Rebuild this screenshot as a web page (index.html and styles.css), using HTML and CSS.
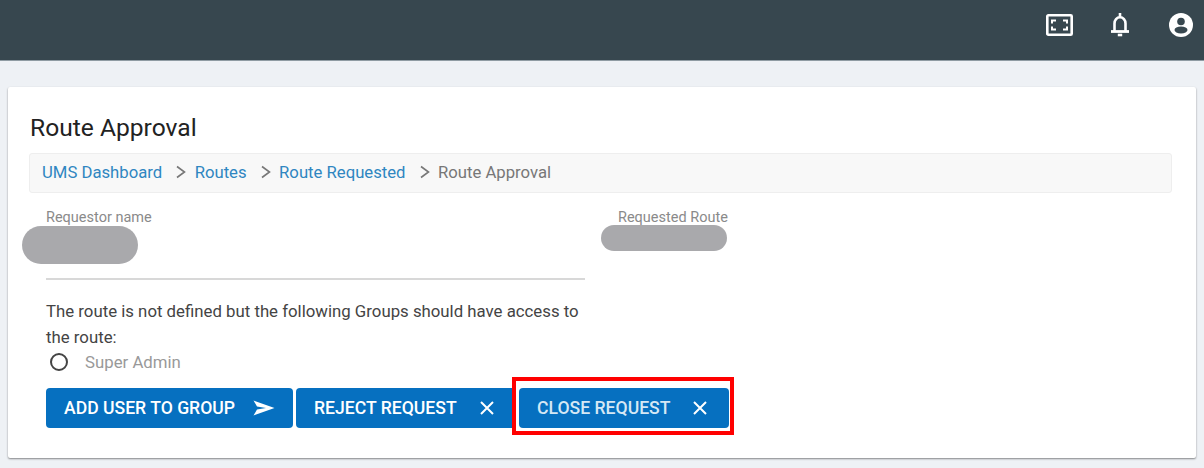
FILE: index.html
```html
<!DOCTYPE html>
<html lang="en">
<head>
    <meta charset="UTF-8">
    <title>Route Approval</title>
    <link rel="stylesheet" href="styles.css">
</head>
<body>
    <header class="topbar">
        <svg class="top-icon" width="27" height="22" viewBox="0 0 27 22" fill="none" stroke="#fff">
            <rect x="1.300" y="1.300" width="24.400" height="19.400" rx="1" stroke-width="2.600"/>
            <path d="M6 9.500V6.500H10M17 6.500H21V9.500M21 12.500V15.500H17M10 15.500H6V12.500" stroke-width="2"/>
        </svg>
        <svg class="top-icon icon-bell" width="20" height="24" viewBox="0 0 20 24" fill="none" stroke="#fff">
            <path d="M4.500 18V10.500C4.500 7 6.800 4.300 10 4.300S15.500 7 15.500 10.500V18" stroke-width="2.600"/>
            <path d="M1 18.500H19" stroke-width="2.800"/>
            <path d="M10 0V4" stroke-width="2.600"/>
            <path d="M7.800 22H12.200" stroke-width="2.600"/>
        </svg>
        <svg class="top-icon icon-user" width="24" height="24" viewBox="0 0 24 24">
            <circle cx="12" cy="12" r="12" fill="#fff"/>
            <circle cx="12" cy="8.500" r="3.800" fill="#37474f"/>
            <ellipse cx="12" cy="17" rx="6.500" ry="3.400" fill="#37474f"/>
        </svg>
    </header>

    <main class="card">
        <h1 class="page-title">Route Approval</h1>
        <nav class="breadcrumb">
            <a href="#">UMS Dashboard</a>
            <svg class="crumb-sep" width="12" height="14" viewBox="0 0 12 14" fill="none" stroke="#777" stroke-width="1.600"><path d="M2 1.500L9.500 7L2 12.500"/></svg>
            <a href="#">Routes</a>
            <svg class="crumb-sep" width="12" height="14" viewBox="0 0 12 14" fill="none" stroke="#777" stroke-width="1.600"><path d="M2 1.500L9.500 7L2 12.500"/></svg>
            <a href="#">Route Requested</a>
            <svg class="crumb-sep" width="12" height="14" viewBox="0 0 12 14" fill="none" stroke="#777" stroke-width="1.600"><path d="M2 1.500L9.500 7L2 12.500"/></svg>
            <span>Route Approval</span>
        </nav>

        <section class="form-row">
            <div class="field-left">
                <label class="field-label">Requestor name</label>
                <div class="blob blob-name"></div>
                <div class="field-line"></div>
            </div>
            <div class="field-right">
                <label class="field-label">Requested Route</label>
                <div class="blob blob-route"></div>
            </div>
        </section>

        <p class="note">The route is not defined but the following Groups should have access to the route:</p>
        <div class="radio-row">
            <span class="radio"></span>
            <span class="radio-label">Super Admin</span>
        </div>

        <div class="actions">
            <button class="btn btn-add">ADD USER TO GROUP
                <svg width="22" height="16" viewBox="0 0 22 16" fill="#fff"><path d="M0.500 0.500L21.500 8L0.500 15.500L4 9.500L13 8L4 6.500Z"/></svg>
            </button>
            <button class="btn btn-reject">REJECT REQUEST
                <svg width="16" height="16" viewBox="0 0 16 16" fill="none" stroke="#fff" stroke-width="2"><path d="M2 2L14 14M14 2L2 14"/></svg>
            </button>
            <div class="highlight">
                <button class="btn btn-close">CLOSE REQUEST
                    <svg width="16" height="16" viewBox="0 0 16 16" fill="none" stroke="#fff" stroke-width="2"><path d="M2 2L14 14M14 2L2 14"/></svg>
                </button>
            </div>
        </div>
    </main>
</body>
</html>
```

FILE: styles.css
```css
* {
    box-sizing: border-box;
}
body {
    margin: 0;
    height: 468px;
    overflow: hidden;
    background-color: #eef1f5;
    font-family: Roboto, "Liberation Sans", sans-serif;
    color: #333;
}
.topbar {
    height: 61px;
    background-color: #37474f;
    border-bottom: 1px solid #8f9ba3;
    display: flex;
    align-items: center;
    justify-content: flex-end;
    padding: 0 11px 10px 0;
}
.top-icon {
    display: block;
    margin-left: 37px;
}
.icon-user {
    margin-left: 39px;
}
.card {
    margin: 26px 8px 0;
    height: 371px;
    background-color: #fff;
    border-radius: 2px;
    box-shadow: 0 1px 2px rgba(0, 0, 0, 0.45);
    padding: 25px 24px 0 21px;
}
.page-title {
    margin: 0 0 9px 1px;
    font-size: 24.600px;
    line-height: 32px;
    font-weight: 400;
    color: #222;
}
.breadcrumb {
    height: 40px;
    display: flex;
    align-items: center;
    padding: 0 0 2px 12px;
    background-color: #f8f8f8;
    border: 1px solid #eee;
    border-radius: 3px;
    font-size: 16.700px;
    color: #777;
}
.breadcrumb a {
    color: #2f86c1;
    text-decoration: none;
}
.crumb-sep {
    margin: 0 7.500px 0 13px;
}
.form-row {
    display: flex;
    padding-left: 17px;
    margin-top: 16px;
}
.field-left {
    width: 539px;
    position: relative;
}
.field-right {
    margin-left: 33px;
    position: relative;
}
.field-label {
    display: block;
    font-size: 14.500px;
    line-height: 17px;
    color: #8a8a8a;
}
.blob {
    position: absolute;
    background-color: #a9a9ac;
}
.blob-name {
    left: -24px;
    top: 17px;
    width: 116px;
    height: 38px;
    border-radius: 19px;
}
.blob-route {
    left: -17px;
    top: 16px;
    width: 126px;
    height: 26px;
    border-radius: 13px;
}
.field-line {
    margin-top: 52px;
    height: 2px;
    background-color: #d8d8d8;
}
.note {
    width: 540px;
    margin: 18px 0 0 17px;
    font-size: 16.800px;
    line-height: 26px;
    color: #444;
}
.radio-row {
    display: flex;
    align-items: center;
    margin: 0 0 0 21px;
    height: 24px;
}
.radio {
    width: 18px;
    height: 18px;
    border: 2px solid #444;
    border-radius: 50%;
}
.radio-label {
    margin-left: 17px;
    font-size: 16.800px;
    color: #999;
}
.actions {
    display: flex;
    align-items: flex-start;
    margin: 0 0 0 17px;
    padding-top: 14px;
}
.btn {
    height: 40px;
    display: flex;
    align-items: center;
    justify-content: space-between;
    padding: 0 18px;
    border: 0;
    border-radius: 4px;
    background-color: #0670c0;
    color: #fff;
    font-family: inherit;
    font-size: 17.600px;
    font-weight: 500;
    white-space: nowrap;
}
.btn-add {
    width: 247px;
}
.btn-reject {
    width: 216px;
    margin-left: 3px;
    padding-right: 17px;
    border-radius: 4px 0 0 4px;
}
.btn-close {
    width: 210px;
    padding-right: 21px;
    color: #d5e8f5;
}
.highlight {
    margin: -11px 0 0 0;
    padding: 7px 1px 3px 3px;
    background-color: #fff;
    border: 4px solid #ff0000;
}
```
